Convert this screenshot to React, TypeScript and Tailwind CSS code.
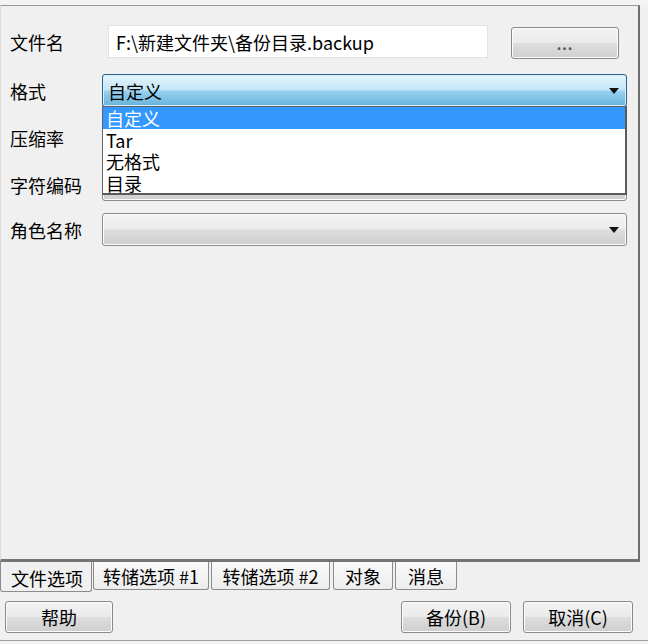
import React from "react";

const btn =
  "flex items-center justify-center rounded-[3px] border border-[#8a8a8a] shadow-[inset_0_0_0_1px_#fcfcfc] bg-[linear-gradient(to_bottom,#f2f2f2_0%,#ebebeb_48%,#dddddd_52%,#cfcfcf_100%)]";

function Arrow() {
  return (
    <svg width="10" height="6" viewBox="0 0 10 6" className="absolute right-[7px] top-1/2 -translate-y-1/2">
      <polygon points="0,0 10,0 5,6" fill="#111" />
    </svg>
  );
}

function Label({ children }: { children: React.ReactNode }) {
  return <div className="w-[92px] shrink-0 text-[18px] leading-none text-black">{children}</div>;
}

function GrayCombo() {
  return (
    <div className={"relative w-[525px] h-[33px] " + btn}>
      <Arrow />
    </div>
  );
}

export default function App() {
  return (
    <div className="w-[648px] h-[644px] bg-[#f0f0f0] overflow-hidden flex flex-col font-['Noto_Sans_CJK_SC',sans-serif] text-black">
      <div className="h-[5px] shrink-0 bg-[#f4f4f4]" />
      <div className="relative w-[640px] h-[557px] shrink-0 border-t border-t-[#9a9a9a] border-l border-l-[#dadada] border-r-2 border-r-[#6e6e6e] border-b-[3px] border-b-[#747474] pt-[19px] pl-[9px] flex flex-col">
        {/* row 1 */}
        <div className="flex items-center h-[33px]">
          <Label>文件名</Label>
          <div className="ml-[6px] w-[380px] h-[33px] bg-white border border-[#e2e2e2] flex items-center pl-[7px] text-[18px] leading-none whitespace-nowrap">
            F:\新建文件夹\备份目录.backup
          </div>
          <div className={"ml-[23px] mt-[2px] w-[108px] h-[32px] text-[#555] text-[14px] font-bold tracking-[1px] " + btn}>
            <span className="-mt-[2px] pt-[6px]">...</span>
          </div>
        </div>
        {/* row 2 */}
        <div className="flex items-center h-[33px] mt-[16px]">
          <Label>格式</Label>
          <div className="relative w-[525px] h-[33px]">
            <div className="relative w-full h-full rounded-[3px] border border-[#2c628b] shadow-[inset_0_0_0_1px_#d6eefb] bg-[linear-gradient(to_bottom,#e5f4fc_0%,#c4e5f6_48%,#98d1ef_52%,#68b3db_100%)] flex items-center pl-[5px] text-[18px] leading-none">
              自定义
              <Arrow />
            </div>
            <div className="absolute left-0 top-[32px] w-[525px] h-[89px] bg-white border border-[#646464] border-r-2 border-r-[#5a5a5a] border-b-2 border-b-[#5a5a5a] z-10 flex flex-col text-[18px] leading-none">
              <div className="h-[22px] bg-[#3399ff] text-white flex items-center pl-[3px]">自定义</div>
              <div className="h-[22px] flex items-center pl-[3px]">Tar</div>
              <div className="h-[22px] flex items-center pl-[3px]">无格式</div>
              <div className="h-[21px] flex items-center pl-[3px]">目录</div>
            </div>
          </div>
        </div>
        {/* row 3 */}
        <div className="flex items-center h-[33px] mt-[14px]">
          <Label>压缩率</Label>
          <GrayCombo />
        </div>
        {/* row 4 */}
        <div className="flex items-center h-[33px] mt-[14px]">
          <Label>字符编码</Label>
          <GrayCombo />
        </div>
        {/* row 5 */}
        <div className="flex items-center h-[33px] mt-[12px]">
          <Label>角色名称</Label>
          <GrayCombo />
        </div>
      </div>
      {/* tabs */}
      <div className="flex items-start h-[30px] shrink-0 text-[18px] leading-none">
        <div className="w-[92px] h-[30px] border-l border-r border-b border-[#8c8c8c] rounded-b-[3px] flex items-end justify-center pb-[4px] pl-[2px]">文件选项</div>
        <div className="ml-[1px] w-[116px] h-[28px] border-l border-r border-b border-[#8c8c8c] rounded-b-[3px] bg-[linear-gradient(to_bottom,#fafafa,#ececec)] flex items-center justify-center whitespace-nowrap">转储选项 #1</div>
        <div className="ml-[2px] w-[119px] h-[28px] border-l border-r border-b border-[#8c8c8c] rounded-b-[3px] bg-[linear-gradient(to_bottom,#fafafa,#ececec)] flex items-center justify-center whitespace-nowrap">转储选项 #2</div>
        <div className="ml-[3px] w-[60px] h-[28px] border-l border-r border-b border-[#8c8c8c] rounded-b-[3px] bg-[linear-gradient(to_bottom,#fafafa,#ececec)] flex items-center justify-center">对象</div>
        <div className="ml-[2px] w-[62px] h-[28px] border-l border-r border-b border-[#8c8c8c] rounded-b-[3px] bg-[linear-gradient(to_bottom,#fafafa,#ececec)] flex items-center justify-center">消息</div>
      </div>
      {/* buttons */}
      <div className="flex items-center h-[32px] mt-[9px] shrink-0 text-[18px] leading-none">
        <div className={"ml-[5px] w-[108px] h-[32px] " + btn}>帮助</div>
        <div className="flex-1" />
        <div className={"w-[110px] h-[32px] " + btn}>备份(B)</div>
        <div className={"ml-[12px] mr-[15px] w-[110px] h-[32px] " + btn}>取消(C)</div>
      </div>
      <div className="mt-[7px] flex-1 border-t border-[#a0a0a0] bg-[#f4f4f4]" />
    </div>
  );
}
